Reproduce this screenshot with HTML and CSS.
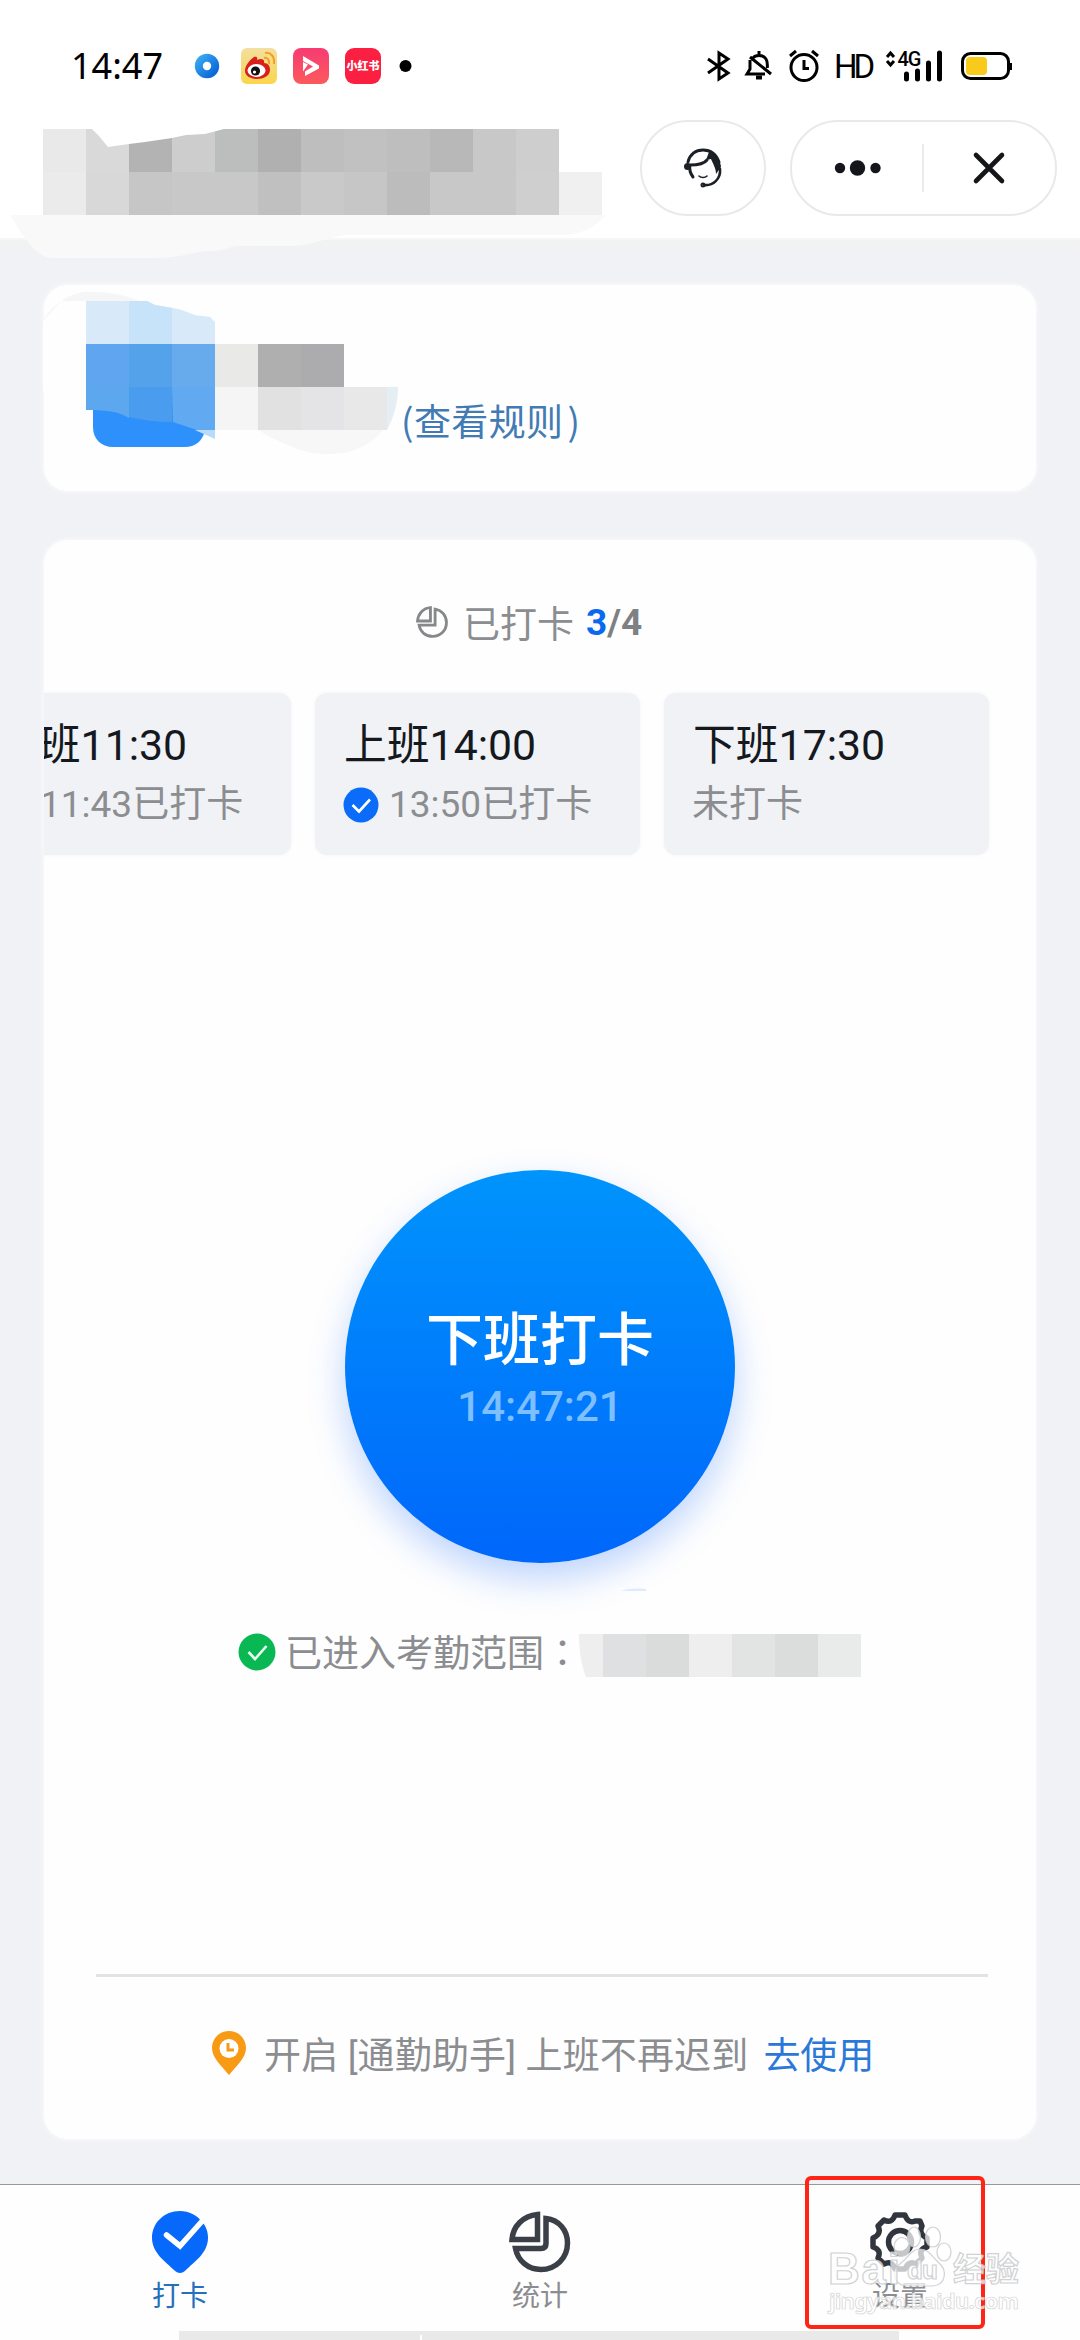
FILE: index.html
```html
<!DOCTYPE html>
<html lang="zh-CN">
<head>
<meta charset="utf-8">
<title>打卡</title>
<link rel="stylesheet" href="styles.css">
</head>
<body>
<div class="screen">
  <header class="status">
    <span class="clock">14:47</span>
    <svg class="apps" width="224" height="44" viewBox="190 44 224 44">
      <defs>
        <linearGradient id="blu" x1="0" y1="0" x2="1" y2="1"><stop offset="0" stop-color="#37a6ee"/><stop offset="1" stop-color="#0a66d8"/></linearGradient>
        <linearGradient id="yel" x1="0" y1="0" x2="0" y2="1"><stop offset="0" stop-color="#f3dfa0"/><stop offset="1" stop-color="#fbd54a"/></linearGradient>
        <linearGradient id="pnk" x1="0" y1="0" x2="0" y2="1"><stop offset="0" stop-color="#f73b72"/><stop offset="1" stop-color="#fb5a5c"/></linearGradient>
      </defs>
      <circle cx="207" cy="66" r="8.2" fill="none" stroke="url(#blu)" stroke-width="8"/>
      <rect x="241" y="48" width="36" height="36" rx="6" fill="url(#yel)"/>
      <path d="M245 71c0-6 5-11 9-14 2-1 4 0 3 3 4-2 8-1 7 3 4 0 6 3 6 7 0 6-7 9-13 9s-12-3-12-8z" fill="#d81f1c"/>
      <ellipse cx="256.500" cy="70.500" rx="9" ry="6.500" fill="#fff"/>
      <circle cx="255.500" cy="71" r="4.600" fill="#111"/><circle cx="254.500" cy="72" r="1.600" fill="#fff"/>
      <path d="M264 58c3-1 6 2 5 6M265 53c6-1 10 4 9 11" fill="none" stroke="#f0a028" stroke-width="2"/>
      <rect x="293" y="48" width="36" height="36" rx="8" fill="url(#pnk)"/>
      <path d="M303 56l16 9.500v3L305 76v-4.500l8-5-10-5.500z" fill="#fff"/><path d="M303 62l5 2.500-5 7z" fill="#fff"/>
      <rect x="345" y="48" width="36" height="36" rx="9" fill="#fb1f41"/>
      <text x="363" y="70" text-anchor="middle" class="redtag">小红书</text>
      <circle cx="405.500" cy="66" r="6" fill="#000"/>
    </svg>
    <svg class="sys" width="310" height="44" viewBox="704 44 310 44" fill="none" stroke="#000" stroke-width="3">
      <path d="M708 59l20 14-9 6V53l9 6-20 14"/>
      <path d="M759 51v4M753 58c2-3 10-4 13 1 2 3 1 6 1.500 9M750 60v9l-3 5h18M750 57l21 17"/><path d="M756 77.500h6" stroke-width="4"/>
      <circle cx="804" cy="67.500" r="13"/><path d="M804 60v8.500h5M790 56l6-5M818 56l-6-5"/>
      <text x="834" y="77.500" class="hd">HD</text>
      <path d="M887 57l3.500-4 3.500 4M887 61l3.500 4 3.500-4"/>
      <text x="897.500" y="65.500" class="net">4G</text>
      <path d="M906.500 74v5M917.500 71v8M928.500 63v16M939.500 53v26" stroke-width="5" stroke-linecap="round"/>
      <rect x="962.500" y="53.500" width="46" height="25" rx="8"/><rect x="966" y="57" width="21" height="18" rx="4" fill="#f8ca1c" stroke="none"/>
      <path d="M1010 63v7" stroke-width="4"/>
    </svg>
  </header>

  <div class="titlebar">
    <svg class="name-mask" width="620" height="148" viewBox="0 112 620 148">
      <path d="M10 215C26 242 38 256 50 258H150C185 258 195 251 210 251 225 251 230 246 238 246H290C315 246 330 235 350 235H560C580 235 595 228 606 215z" fill="#f9f9f9"/>
      <g shape-rendering="crispEdges">
        <path d="M43 129h43v43H43z" fill="#e9e9e9"/><path d="M86 129h43v43H86z" fill="#d9d9d9"/><path d="M129 129h43v43h-43z" fill="#b3b3b3"/><path d="M172 129h43v43h-43z" fill="#cdcdcd"/><path d="M215 129h43v43h-43z" fill="#bbbebc"/><path d="M258 129h43v43h-43z" fill="#b0b0b0"/><path d="M301 129h43v43h-43z" fill="#bebebe"/><path d="M344 129h43v43h-43z" fill="#c1c1c1"/><path d="M387 129h43v43h-43z" fill="#bebebe"/><path d="M430 129h43v43h-43z" fill="#b8b8b8"/><path d="M473 129h43v43h-43z" fill="#c8c8c8"/><path d="M516 129h43v43h-43z" fill="#cecece"/>
        <path d="M43 172h43v43H43z" fill="#ebebeb"/><path d="M86 172h43v43H86z" fill="#d8d8d8"/><path d="M129 172h43v43h-43z" fill="#c6c6c6"/><path d="M172 172h86v43h-86z" fill="#c8c8c8"/><path d="M258 172h43v43h-43z" fill="#c0c0c0"/><path d="M301 172h43v43h-43z" fill="#c9c9c9"/><path d="M344 172h43v43h-43z" fill="#c6c6c6"/><path d="M387 172h43v43h-43z" fill="#bcbcbc"/><path d="M430 172h86v43h-86z" fill="#c8c8c8"/><path d="M516 172h43v43h-43z" fill="#cfcfcf"/><path d="M559 172h43v43h-43z" fill="#f0f0f0"/>
      </g>
      <path d="M91 128l8 8 9 11 21-3 16-2 27-4 14-3 19-1 19-5 56-2v-1z" fill="#fff"/>
    </svg>
    <div class="pill help">
      <svg width="40" height="40" viewBox="681 147 40 40" fill="none" stroke="#1b2026" stroke-width="3" stroke-linecap="round">
        <path d="M686 161c2-8 8-12 15-12s13 4 16 12"/><path d="M688 164c-1 5 0 8 3 12M688 164c7 0 14-1 17-5" stroke-width="3"/>
        <path d="M704 159l3-8c6 2 12 9 12 15l-5 7c0-6-3-10-5-15z" fill="#1b2026" stroke="none"/><circle cx="685.500" cy="165.500" r="3.500" fill="#1b2026" stroke="none"/>
        <path d="M718 168c1 10-7 17-16 16" stroke-width="2.600"/><circle cx="701" cy="184" r="1"/><path d="M697 175c2 2 6 2 8 0" stroke-width="1.600"/>
      </svg>
    </div>
    <div class="pill menu">
      <svg width="48" height="20" viewBox="833 158 48 20" fill="#14161a"><circle cx="839" cy="168" r="5.200"/><circle cx="856.500" cy="168" r="7.700"/><circle cx="874.500" cy="168" r="5.200"/></svg>
      <span class="pill-line"></span>
      <svg width="34" height="34" viewBox="0 0 34 34"><path d="M4 4l26 26M30 4L4 30" stroke="#14161a" stroke-width="4.600" stroke-linecap="round"/></svg>
    </div>
  </div>

  <main>
    <section class="card profile">
      <svg class="person-mask" width="358" height="174" viewBox="43 290 358 174">
        <path d="M43 321C55 300 75 292 86 292 115 291 140 298 155 310L150 330H43z" fill="#f6f6f8"/>
        <path d="M43 321l18-20h60v90H43z" fill="#fefefe"/>
        <path d="M93 380h112v50c-2 11-10 17-20 17h-72c-12 0-20-8-20-20z" fill="#2e91fb"/>
        <path d="M215 425V430h43C310 460 325 454 344 453 370 448 390 430 397 400L300 420z" fill="#f7f7f7"/>
        <path d="M86 301h61l8 4 24 4 16 6 15 2 5 5v22H86z" fill="#d8eaf9"/><path d="M129 301h18l8 4 17 3v36h-43z" fill="#c7e3f9"/>
        <path d="M86 344h43v43H86z" fill="#5fa5f0"/><path d="M129 344h43v43h-43z" fill="#54a2ea"/><path d="M172 344h43v43h-43z" fill="#67abed"/>
        <path d="M86 387h43v31c-10-6-20-8-43-8z" fill="#5da7ef"/><path d="M129 387h43v35c-15 0-30-2-43-5z" fill="#4a9dee"/><path d="M172 387h43v43h-18l-24-8z" fill="#61a9f0"/><path d="M195 430h20v9z" fill="#b9dafa"/>
        <path d="M215 344h43v43h-43z" fill="#e9eae8"/><path d="M258 344h43v43h-43z" fill="#afafaf"/><path d="M301 344h43v43h-43z" fill="#acacaf"/>
        <path d="M215 387h43v43h-43z" fill="#f5f5f5"/><path d="M258 387h43v43h-43z" fill="#e1e1e1"/><path d="M301 387h43v43h-43z" fill="#e4e4e6"/><path d="M344 387h43v43h-43z" fill="#e8e8e8"/><path d="M387 387h11c0 15-4 30-11 43z" fill="#e5eef2"/>
      </svg>
      <a class="rules">(查看规则<span>)</span></a>
    </section>

    <section class="card clockin">
      <div class="progress">
        <svg width="34" height="32" viewBox="0 0 62 62" fill="none" stroke="#86888a" stroke-width="5.500"><path d="M28 3C14 4 4 15 3 29H28z"/><path d="M37 6C50 8 59 19 59 32 59 48 47 59 32 59 19 59 8 50 6 37H37z"/></svg>
        <span class="progress-label">已打卡</span><b><em>3</em>/4</b>
      </div>
      <div class="shifts">
        <div class="shift"><p class="when">上班11:30</p><p class="state"><svg width="36" height="36" viewBox="0 0 36 36"><circle cx="18" cy="18" r="17.500" fill="#0a6cf8"/></svg>11:43已打卡</p></div>
        <div class="shift"><p class="when">上班14:00</p><p class="state"><svg width="36" height="36" viewBox="0 0 36 36"><circle cx="18" cy="18" r="17.500" fill="#0a6cf8"/><path d="M9.500 18l6.500 6.500 11-12" fill="none" stroke="#fff" stroke-width="2.600"/></svg>13:50已打卡</p></div>
        <div class="shift"><p class="when">下班17:30</p><p class="state">未打卡</p></div>
      </div>
      <div class="action">
        <button class="punch"><span class="punch-name">下班打卡</span><span class="punch-time">14:47:21</span></button>
      </div>
      <div class="range">
        <svg width="38" height="38" viewBox="0 0 38 38"><circle cx="19" cy="19" r="18.500" fill="#09b853"/><path d="M10.500 19l6.500 7 11.500-13" fill="none" stroke="#e8fff0" stroke-width="2.600"/></svg>
        <span class="range-text">已进入考勤范围<i lang="zh-TW">：</i></span>
        <svg class="place-mask" width="284" height="94" viewBox="578 1587 284 94">
          <path d="M620 1591c6-3 18-3 25-2v2z" fill="#dfeaff"/>
          <path d="M578 1634h24v43h-17c-5-12-7-28-7-43z" fill="#eee"/><path d="M602 1634h43v43h-43z" fill="#dfe0e2"/><path d="M645 1634h43v43h-43z" fill="#d9dcda"/><path d="M688 1634h43v43h-43z" fill="#eee"/><path d="M731 1634h43v43h-43z" fill="#e1e4e2"/><path d="M774 1634h43v43h-43z" fill="#dadddb"/><path d="M817 1634h43v43h-43z" fill="#e9ebea"/>
        </svg>
      </div>
      <footer class="assist">
        <svg width="34" height="44" viewBox="0 0 34 44"><path d="M17 0C7 0 0 8 0 17c0 10 9 17 17 27 8-10 17-17 17-27C34 8 27 0 17 0z" fill="#f79a14"/><circle cx="17" cy="17.500" r="9.500" fill="#fff"/><path d="M16 12v7h6" fill="none" stroke="#f79a14" stroke-width="3"/></svg>
        <span class="assist-text">开启 [通勤助手] 上班不再迟到</span><a>去使用</a>
      </footer>
    </section>
  </main>

  <nav class="tabs">
    <a class="tab active">
      <svg width="56" height="62" viewBox="0 0 56 62"><path d="M28 0C12 0 0 12 0 27 0 42 14 51 22 59c4 4 8 4 12 0C42 51 56 42 56 27 56 21 54 15 50 11 45 4 37 0 28 0z" fill="#0669fb"/><path d="M14.500 24L28 35 52 8" fill="none" stroke="#fff" stroke-width="5.500" stroke-linecap="round"/></svg>
      <span>打卡</span>
    </a>
    <a class="tab">
      <svg width="62" height="62" viewBox="0 0 62 62" fill="none" stroke="#3b4048" stroke-width="5.500"><path d="M28.500 3.500C14 5 4 15 3 28.500H28.500z"/><path d="M37 7.500C50 9 58.500 19 58.500 32 58.500 47 47 58.500 32 58.500 19 58.500 9 50 6.500 37.500H32q5 0 5-5z"/></svg>
      <span>统计</span>
    </a>
    <a class="tab">
      <svg width="62" height="62" viewBox="0 0 62 62" fill="none" stroke="#31363e" stroke-width="5.500"><path stroke-linejoin="round" d="M26 4H36Q39 13 46 10L51 10 53 15Q49 23 58 27V36Q49 38 53 47L47 53Q40 49 36 58H26Q23 49 15 53L9 47Q13 39 4 36V27Q13 23 9 15L15 9Q23 13 26 4z"/><circle cx="31" cy="31" r="11.500"/></svg>
      <span>设置</span>
    </a>
  </nav>
  <div class="strip"><i></i></div>

  <div class="highlight"></div>
  <svg class="watermark" width="204" height="104" viewBox="822 2220 204 104">
    <g fill="#fff" fill-opacity=".72" stroke="#c4c6c8" stroke-opacity=".8" stroke-width="1.200">
      <ellipse cx="914" cy="2237" rx="6.500" ry="10"/><ellipse cx="933" cy="2237" rx="7.500" ry="10"/><ellipse cx="902" cy="2247" rx="8" ry="9.500"/><ellipse cx="944" cy="2252" rx="7" ry="9"/>
      <path d="M920 2249c9 0 12 8 19 14 8 7 8 22-7 23h-24c-15 0-17-16-7-23 7-5 10-14 19-14z"/>
      <text x="828" y="2284" class="wm-bai" textLength="72">Bai</text><text x="907" y="2279" class="wm-du">du</text><text x="953" y="2281" class="wm-jy">经验</text>
      <text x="829" y="2309" class="wm-url" textLength="190" stroke-width=".7">jingyan.baidu.com</text>
    </g>
  </svg>
</div>
</body>
</html>
```
FILE: styles.css
```css
* { box-sizing: border-box; }
body { margin: 0; font-family: Roboto, "Noto Sans CJK SC", sans-serif; color: #8b8d90; font-size: 37px; }
p { margin: 0; }
svg { display: block; flex: none; overflow: visible; }
.screen { position: relative; width: 1080px; height: 2340px; overflow: hidden; background: #f1f2f6; display: flex; flex-direction: column; }

.status { height: 112px; background: #fff; display: flex; align-items: center; padding: 20px 66px 0 71px; }
.clock { font: 36px/44px "Noto Sans", sans-serif; color: #000; width: 119px; }
.sys { margin-left: auto; }
.redtag { font: 900 11px "Noto Sans CJK SC", sans-serif; fill: #fff; }
.hd { font: 33px Roboto, sans-serif; fill: #000; stroke: none; letter-spacing: -4px; }
.net { font: 500 20px Roboto, sans-serif; fill: #000; stroke: none; letter-spacing: -1px; }

.titlebar { height: 128px; background: #fff; display: flex; align-items: flex-start; border-bottom: 2px solid #f6f6f6; position: relative; z-index: 1; }
.pill { height: 96px; margin-top: 8px; border: 2px solid #e9e9e9; border-radius: 48px; display: flex; align-items: center; background: #fff; }
.help { width: 126px; margin-left: 20px; justify-content: center; }
.menu { width: 267px; margin-left: 24px; padding: 0 49px 0 42px; justify-content: space-between; }
.pill-line { width: 2px; height: 48px; background: #ebebeb; margin-left: 15px; margin-right: 24px; }

main { padding: 45px 44px 0; height: 1944px; background: linear-gradient(#f2f2f3, #f1f2f6 20px); }
.card { background: #fefefe; border-radius: 24px; box-shadow: 0 0 5px #fff; overflow: hidden; }
.profile { height: 206px; display: flex; overflow: visible; }
.person-mask { margin: 5px 0 0 -1px; }
.rules { color: #427bb4; line-height: 54px; margin-top: 108px; letter-spacing: .4px; font-family: "Noto Sans CJK SC", sans-serif; }
.rules span { margin-left: 4px; }

.clockin { height: 1599px; margin-top: 49px; display: flex; flex-direction: column; }
.progress { display: flex; align-items: center; height: 54px; margin: 55px 0 0 371px; }
.progress-label { margin: 0 12px 0 14px; }
.progress b { font-weight: 700; color: #7e8082; }
.progress em { font-style: normal; color: #0a69ee; }
.shifts { display: flex; gap: 24px; margin: 44px 0 0 -78px; }
.shift { width: 325px; height: 162px; flex: none; background: #f0f2f5; border-radius: 12px; padding: 22px 0 0 29px; box-shadow: 0 0 4px #f4f5f6; }
.when { font-size: 42.800px; line-height: 60px; color: #15191f; }
.state { display: flex; align-items: center; gap: 10px; line-height: 54px; margin: 3px 0 0 -1px; }
.action { display: flex; justify-content: center; margin-top: 315px; }
.punch { width: 390px; height: 393px; border: 0; border-radius: 50%; padding: 5px 0 0; font-family: inherit; color: #fff; background: linear-gradient(#0094fc, #0067fb); box-shadow: 0 16px 36px rgba(20, 104, 250, .28); display: flex; flex-direction: column; align-items: center; justify-content: center; }
.punch-name { font-size: 57px; font-weight: 500; line-height: 76px; }
.punch-time { font-size: 42px; font-weight: 500; line-height: 56px; color: #7dbfff; }
.range { display: flex; align-items: center; height: 54px; margin: 62px 0 0 194px; }
.range-text { margin: -3px 0 0 9px; }
.range-text i { font-style: normal; font-family: "Noto Sans CJK TC", sans-serif; }
.place-mask { margin: -37px 0 0 -2px; }
.assist { display: flex; align-items: center; justify-content: flex-start; margin: 295px 48px 0 52px; border-top: 3px solid #e2e3e3; height: 154px; padding-left: 116px; }
.assist-text { margin-left: 18px; letter-spacing: .15px; }
.assist a { margin-left: 15px; color: #2a78d8; }

.tabs { display: flex; height: 147px; background: #fefefe; border-top: 1px solid #999; }
.tab { flex: 1; display: flex; flex-direction: column; align-items: center; padding-top: 26px; font-size: 28px; line-height: 40px; }
.tab span { margin-top: 4px; }
.active { color: #2470bc; }
.strip { height: 9px; background: linear-gradient(90deg, #fefefe 179px, #e9e9ea 179px 899px, #fefefe 899px); }
.strip i { display: block; width: 2px; height: 5px; margin: 4px 0 0 420px; background: #fff; }

.highlight { position: absolute; left: 805px; top: 2176px; width: 180px; height: 153px; border: 4px solid #ff2415; border-radius: 6px; }
.watermark { position: absolute; left: 822px; top: 2220px; }
.wm-bai { font: 700 44px "Liberation Sans", sans-serif; }
.wm-du { font: 700 26px "Liberation Sans", sans-serif; letter-spacing: -1px; }
.wm-jy { font: 700 33px "Noto Sans CJK SC", sans-serif; }
.wm-url { font: 700 22px "Noto Sans", sans-serif; }
```
